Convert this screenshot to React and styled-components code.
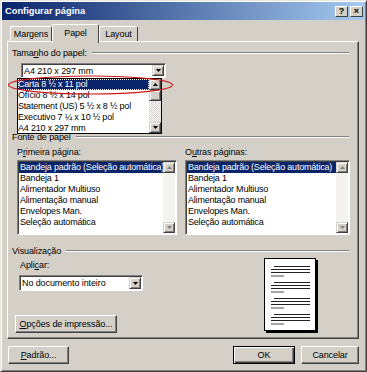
import React from 'react';
import styled, { createGlobalStyle } from 'styled-components';

const GlobalStyle = createGlobalStyle`
  body {
    margin: 0;
    font-family: "Liberation Sans", Arial, sans-serif;
    font-size: 9px;
    letter-spacing: -0.1px;
    color: #000;
  }
`;

const sizes = [
  'Carta 8 ½ x 11 pol',
  'Ofício  8 ½ x 14 pol',
  'Statement (US) 5 ½ x 8 ½ pol',
  'Executivo 7 ¼ x 10 ½ pol',
  'A4 210 x 297 mm',
];

const trays = [
  'Bandeja padrão (Seleção automática)',
  'Bandeja 1',
  'Alimentador Multiuso',
  'Alimentação manual',
  'Envelopes Man.',
  'Seleção automática',
];

const Window = styled.div`
  position: relative;
  width: 367px;
  height: 372px;
  box-sizing: border-box;
  background: #d4d0c8;
  border: 1px solid;
  border-color: #e8e6e0 #404040 #404040 #e8e6e0;
  box-shadow: inset 1px 1px #fff, inset -1px -1px #808080;
  display: flex;
  flex-direction: column;
  overflow: hidden;
`;

const TitleBar = styled.div`
  height: 18px;
  margin: 1px 1px 0;
  background: linear-gradient(to right, #0a246a, #a6caf0);
  display: flex;
  align-items: center;
  padding: 0 2px 0 3px;
  color: #fff;
  font-weight: bold;
  font-size: 9.3px;
  letter-spacing: 0;
`;

const Title = styled.div`
  flex: 1;
`;

const CaptionButton = styled.div`
  width: 13px;
  height: 11px;
  box-sizing: border-box;
  margin-left: 2px;
  background: #d4d0c8;
  border: 1px solid;
  border-color: #fff #404040 #404040 #fff;
  color: #000;
  font-size: 9px;
  font-weight: bold;
  line-height: 9px;
  text-align: center;
`;

const Body = styled.div`
  flex: 1;
  display: flex;
  flex-direction: column;
  padding: 4px 7px 0 6px;
`;

const TabRow = styled.div`
  display: flex;
  align-items: flex-end;
  height: 17px;
  padding-left: 3px;
  position: relative;
  z-index: 1;
`;

const Tab = styled.div`
  box-sizing: border-box;
  width: ${p => p.w}px;
  height: ${p => (p.active ? '19px' : '15px')};
  margin-bottom: ${p => (p.active ? '-2px' : '0')};
  padding-bottom: ${p => (p.active ? '3px' : '0')};
  background: #d4d0c8;
  border: 1px solid;
  border-bottom: none;
  border-color: #fff #404040 #fff #fff;
  border-radius: 2px 2px 0 0;
  display: flex;
  align-items: center;
  justify-content: center;
`;

const Panel = styled.div`
  height: 298px;
  box-sizing: border-box;
  border: 1px solid;
  border-color: #fff #404040 #404040 #fff;
  box-shadow: inset -1px -1px #808080;
  padding: 5px 5px 0 4px;
  display: flex;
  flex-direction: column;
  position: relative;
`;

const GroupHead = styled.div`
  display: flex;
  align-items: center;
  height: 12px;
  margin-top: ${p => p.top || 0}px;
  &::after {
    content: '';
    flex: 1;
    margin: 0 4px 0 5px;
    border-top: 1px solid #808080;
    border-bottom: 1px solid #fff;
  }
`;

const Label = styled.div`
  height: 12px;
  line-height: 12px;
  margin: ${p => p.m || '0'};
`;

const Combo = styled.div`
  box-sizing: border-box;
  width: ${p => p.w}px;
  height: ${p => p.h}px;
  margin-left: ${p => p.left}px;
  margin-top: ${p => p.top}px;
  background: #fff;
  border: 1px solid;
  border-color: #808080 #fff #fff #808080;
  box-shadow: inset 1px 1px #404040;
  display: flex;
  align-items: stretch;
  padding: 1px 1px 1px 2px;
`;

const ComboText = styled.div`
  flex: 1;
  display: flex;
  align-items: center;
  white-space: nowrap;
`;

const ArrowBtn = styled.div`
  width: 12px;
  box-sizing: border-box;
  background: #d4d0c8;
  border: 1px solid;
  border-color: #d4d0c8 #404040 #404040 #d4d0c8;
  box-shadow: inset 1px 1px #fff, inset -1px -1px #808080;
  display: flex;
  align-items: center;
  justify-content: center;
  height: ${p => p.h || 'auto'};
`;

const Arrow = ({ up, gray }) => (
  <svg width="5" height="3" viewBox="0 0 5 3">
    <path d={up ? 'M2.5 0L5 3H0z' : 'M0 0h5L2.5 3z'} fill={gray ? '#808080' : '#000'} />
  </svg>
);

const DropList = styled.div`
  position: absolute;
  left: 9px;
  top: 36px;
  width: 145px;
  height: 56px;
  box-sizing: border-box;
  background: #fff;
  border: 1px solid #000;
  display: flex;
  z-index: 2;
`;

const Rows = styled.div`
  flex: 1;
  overflow: hidden;
`;

const Row = styled.div`
  height: 11px;
  line-height: 11px;
  padding-left: ${p => (p.tight ? 0 : 1)}px;
  letter-spacing: -0.2px;
  white-space: nowrap;
  background: ${p => (p.sel ? '#0a246a' : 'transparent')};
  color: ${p => (p.sel ? '#fff' : '#000')};
  outline: ${p => (p.focus ? '1px dotted #fff' : 'none')};
  outline-offset: -1px;
`;

const ScrollBar = styled.div`
  width: 12px;
  display: flex;
  flex-direction: column;
`;

const Thumb = styled.div`
  height: ${p => p.h}px;
  box-sizing: border-box;
  background: #d4d0c8;
  border: 1px solid;
  border-color: #d4d0c8 #404040 #404040 #d4d0c8;
  box-shadow: inset 1px 1px #fff, inset -1px -1px #808080;
`;

const Track = styled.div`
  flex: 1;
  background: repeating-conic-gradient(#fff 0 25%, #d4d0c8 0 50%) 0 0 / 2px 2px;
`;

const Ellipse = styled.svg`
  position: absolute;
  left: 0;
  top: 30px;
  z-index: 3;
  pointer-events: none;
`;

const TwoCols = styled.div`
  display: flex;
  gap: 8px;
  padding-left: 5px;
`;

const Col = styled.div`
  display: flex;
  flex-direction: column;
`;

const ListBox = styled.div`
  box-sizing: border-box;
  width: ${p => p.w}px;
  height: 75px;
  margin-top: 2px;
  background: #fff;
  border: 1px solid;
  border-color: #808080 #fff #fff #808080;
  box-shadow: inset 1px 1px #404040;
  display: flex;
  padding: 1px 0 1px 1px;
`;

const DisabledBar = styled.div`
  width: 12px;
  display: flex;
  flex-direction: column;
  justify-content: space-between;
  background: #f4f3ef;
  margin-right: 1px;
`;

const PreviewRow = styled.div`
  display: flex;
  justify-content: space-between;
`;

const PageWrap = styled.div`
  margin: 1px 37px 0 0;
`;

const Page = styled.div`
  width: 52px;
  height: 73px;
  box-sizing: border-box;
  background: #fff;
  border: 1px solid #000;
  box-shadow: 2px 2px 0 #000;
  padding: 7px 0 0 6px;
  display: flex;
  flex-direction: column;
`;

const Line = styled.div`
  height: ${p => (p.gray ? 2 : 1)}px;
  background: ${p => (p.gray ? '#a4a4a4' : '#222')};
  width: ${p => p.w}px;
  margin-left: ${p => p.indent || 0}px;
  margin-bottom: ${p => p.mb || 2}px;
`;

const Button = styled.div`
  box-sizing: border-box;
  width: ${p => p.w}px;
  height: 18px;
  background: #d4d0c8;
  border: 1px solid;
  border-color: ${p => (p.def ? '#000' : '#fff #404040 #404040 #fff')};
  box-shadow: ${p =>
    p.def
      ? 'inset 1px 1px #fff, inset -1px -1px #404040, inset -2px -2px #808080'
      : 'inset -1px -1px #808080'};
  display: flex;
  align-items: center;
  justify-content: center;
  white-space: nowrap;
  margin-left: ${p => p.left || 0}px;
  margin-top: ${p => p.top || 0}px;
`;

const Footer = styled.div`
  display: flex;
  align-items: center;
  padding: 7px 0 0 1px;
`;

const Spacer = styled.div`
  flex: 1;
`;

const U = styled.span`
  text-decoration: underline;
`;

const PageLines = () => (
  <>
    {[0, 1, 2, 3].map(i => (
      <React.Fragment key={i}>
        <Line w={36} indent={3} />
        <Line w={39} />
        <Line w={39} />
        <Line w={13} gray mb={5} />
      </React.Fragment>
    ))}
  </>
);

const TrayList = ({ w }) => (
  <ListBox w={w}>
    <Rows>
      {trays.map((s, i) => (
        <Row key={s} sel={i === 0}>
          {s}
        </Row>
      ))}
    </Rows>
    <DisabledBar>
      <ArrowBtn h="11px">
        <Arrow up gray />
      </ArrowBtn>
      <ArrowBtn h="11px">
        <Arrow gray />
      </ArrowBtn>
    </DisabledBar>
  </ListBox>
);

export default function App() {
  return (
    <>
      <GlobalStyle />
      <Window>
        <TitleBar>
          <Title>Configurar página</Title>
          <CaptionButton>?</CaptionButton>
          <CaptionButton>×</CaptionButton>
        </TitleBar>
        <Body>
          <TabRow>
            <Tab w={42}>Margens</Tab>
            <Tab w={47} active>
              Papel
            </Tab>
            <Tab w={39}>Layout</Tab>
          </TabRow>
          <Panel>
            <GroupHead>
              Tama<U>n</U>ho do papel:
            </GroupHead>
            <Combo w={145} h={15} left={9} top={4}>
              <ComboText>A4 210 x 297 mm</ComboText>
              <ArrowBtn>
                <Arrow />
              </ArrowBtn>
            </Combo>
            <DropList>
              <Rows>
                {sizes.map((s, i) => (
                  <Row key={s} tight sel={i === 0} focus={i === 0}>
                    {s}
                  </Row>
                ))}
              </Rows>
              <ScrollBar>
                <ArrowBtn h="11px">
                  <Arrow up />
                </ArrowBtn>
                <Thumb h={11} />
                <Track />
                <ArrowBtn h="11px">
                  <Arrow />
                </ArrowBtn>
              </ScrollBar>
            </DropList>
            <Ellipse width="180" height="30" viewBox="0 0 180 30">
              <ellipse cx="82.5" cy="13" rx="82" ry="9" fill="none" stroke="#c81818" strokeWidth="1.2" />
            </Ellipse>

            <GroupHead top={53}>Fonte de papel</GroupHead>
            <TwoCols>
              <Col>
                <Label m="3px 0 0 0">
                  P<U>r</U>imeira página:
                </Label>
                <TrayList w={160} />
              </Col>
              <Col>
                <Label m="3px 0 0 0">
                  O<U>u</U>tras páginas:
                </Label>
                <TrayList w={165} />
              </Col>
            </TwoCols>

            <GroupHead top={10}>Visualização</GroupHead>
            <PreviewRow>
              <Col>
                <Label m="2px 0 0 8px">
                  Apli<U>c</U>ar:
                </Label>
                <Combo w={124} h={16} left={7} top={4}>
                  <ComboText>No documento inteiro</ComboText>
                  <ArrowBtn>
                    <Arrow />
                  </ArrowBtn>
                </Combo>
                <Button w={102} left={3} top={24}>
                  <span>
                    <U>O</U>pções de impressão...
                  </span>
                </Button>
              </Col>
              <PageWrap>
                <Page>
                  <PageLines />
                </Page>
              </PageWrap>
            </PreviewRow>
          </Panel>
          <Footer>
            <Button w={61}>
              <span>
                <U>P</U>adrão...
              </span>
            </Button>
            <Spacer />
            <Button w={62} def>
              OK
            </Button>
            <Button w={58} left={6}>
              Cancelar
            </Button>
          </Footer>
        </Body>
      </Window>
    </>
  );
}
